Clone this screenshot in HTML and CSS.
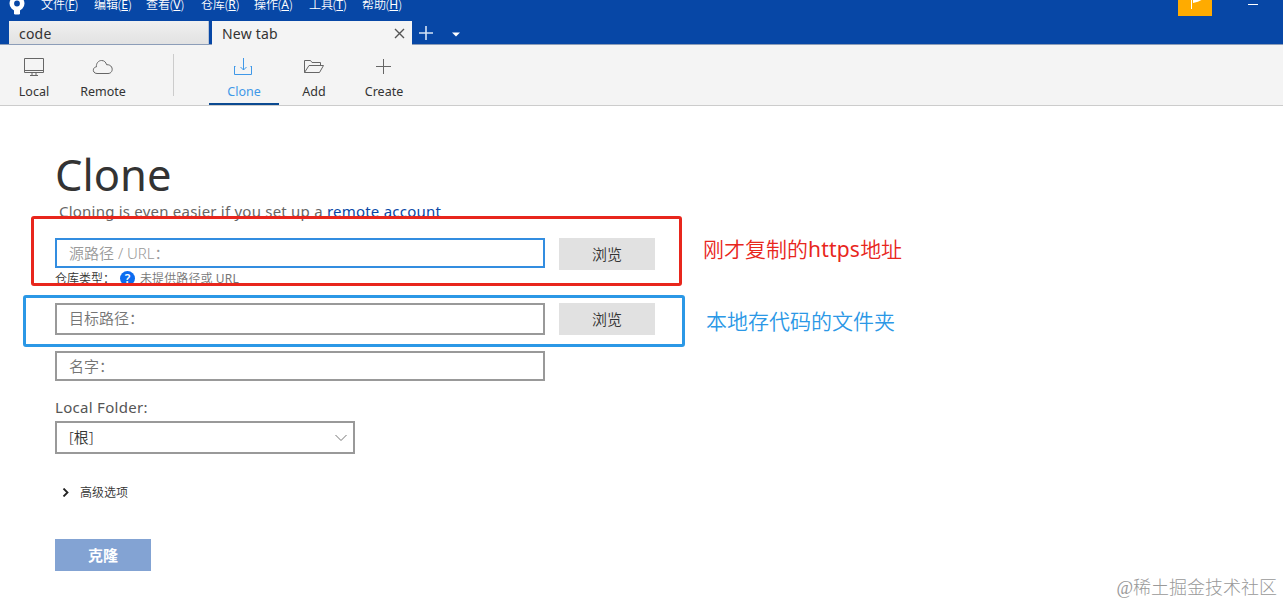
FILE: index.html
```
<!DOCTYPE html>
<html lang="zh-CN">
<head>
    <meta charset="UTF-8">
    <meta name="viewport" content="width=device-width, initial-scale=1.0">
    <title>Sourcetree</title>
    <link rel="stylesheet" href="styles.css">
</head>
<body>
    <header class="titlebar">
        <div class="menu-row">
            <svg class="logo" width="16" height="15" viewBox="0 0 16 15">
                <circle cx="8" cy="3.5" r="5.2" fill="none" stroke="#fff" stroke-width="4.6"/>
                <path d="M5 8h6v5.2q0 1.3-1.3 1.3H6.3Q5 14.5 5 13.2z" fill="#fff"/>
            </svg>
            <nav class="menu">
                <span class="menu-item">文件(<u>F</u>)</span>
                <span class="menu-item">编辑(<u>E</u>)</span>
                <span class="menu-item">查看(<u>V</u>)</span>
                <span class="menu-item">仓库(<u>R</u>)</span>
                <span class="menu-item">操作(<u>A</u>)</span>
                <span class="menu-item">工具(<u>T</u>)</span>
                <span class="menu-item">帮助(<u>H</u>)</span>
            </nav>
            <div class="flag">
                <svg width="34" height="16" viewBox="0 0 34 16">
                    <path d="M13.5 0v9" stroke="#fff" stroke-width="1"/>
                    <path d="M15 0h8.5q-3 2-8.5 3z" fill="#fff"/>
                </svg>
            </div>
            <span class="minimize"></span>
        </div>
        <div class="tabs">
            <div class="tab">code</div>
            <div class="tab active">
                <span>New tab</span>
                <svg width="11" height="11" viewBox="0 0 11 11">
                    <path d="M1 1l9 9M10 1l-9 9" stroke="#555" stroke-width="1.4" fill="none"/>
                </svg>
            </div>
            <svg class="tab-add" width="14" height="14" viewBox="0 0 14 14">
                <path d="M7 0v14M0 7h14" stroke="#d5e3f5" stroke-width="1.6"/>
            </svg>
            <svg class="tab-more" width="8" height="5" viewBox="0 0 8 5">
                <path d="M0 0.5h8L4 4.5z" fill="#fff"/>
            </svg>
        </div>
    </header>

    <div class="toolbar">
        <div class="tool">
            <svg width="22" height="20" viewBox="0 0 22 20">
                <path d="M1.5 1.5h19v14h-19zM1.5 13.5h19M9 15.5v3M13 15.5v3M7 18.5h8"/>
            </svg>
            <span>Local</span>
        </div>
        <div class="tool">
            <svg width="22" height="20" viewBox="0 0 22 20">
                <path d="M5 16.5C.2 16.5.2 10.2 4.4 9.9 4.1 6.2 6.5 3.5 9.5 3.5c2.9 0 4.3 1.7 5.1 4.2C21.8 7.3 21.8 16.5 16 16.5z"/>
            </svg>
            <span>Remote</span>
        </div>
        <span class="separator"></span>
        <div class="tool selected">
            <svg width="22" height="20" viewBox="0 0 22 20">
                <path d="M1.5 9v8.5h17V9M1.5 9.5h1M18.5 9.5h-1M10.5 1v12M7.5 10l3 3 3-3"/>
            </svg>
            <span>Clone</span>
        </div>
        <div class="tool">
            <svg width="22" height="20" viewBox="0 0 22 20">
                <path d="M1.5 15.5v-12h6l1.5 2h8.5v3M1.5 15.5h15l4-7H6z"/>
            </svg>
            <span>Add</span>
        </div>
        <div class="tool">
            <svg width="22" height="20" viewBox="0 0 22 20">
                <path d="M10.5 2v15M3 9.5h15"/>
            </svg>
            <span>Create</span>
        </div>
    </div>

    <main class="content">
        <h1>Clone</h1>
        <p class="intro">Cloning is even easier if you set up a <a href="#">remote account</a></p>

        <div class="row source-row">
            <input type="text" class="field source" placeholder="源路径 / URL：">
            <button type="button" class="browse">浏览</button>
        </div>
        <div class="repo-type">
            <span class="repo-label">仓库类型：</span>
            <span class="help">?</span>
            <span class="repo-status">未提供路径或 <span class="latin">URL</span></span>
        </div>
        <div class="row target-row">
            <input type="text" class="field target" placeholder="目标路径：">
            <button type="button" class="browse">浏览</button>
        </div>
        <input type="text" class="field name" placeholder="名字：">

        <div class="folder-label">Local Folder:</div>
        <div class="select">
            <span>[根]</span>
            <svg width="12" height="8" viewBox="0 0 12 8">
                <path d="M0.5 1l5.5 5.5L11.5 1" stroke="#777" fill="none"/>
            </svg>
        </div>

        <div class="advanced">
            <svg width="7" height="9" viewBox="0 0 7 9">
                <path d="M1.5 0.5l4 4-4 4" stroke="#222" stroke-width="1.8" fill="none"/>
            </svg>
            <span>高级选项</span>
        </div>
        <button type="button" class="clone-button">克隆</button>

        <!-- notes drawn over the form -->
        <div class="mark mark-red"></div>
        <div class="mark mark-blue"></div>
        <div class="note note-red">刚才复制的<span class="latin">https</span>地址</div>
        <div class="note note-blue">本地存代码的文件夹</div>
        <div class="watermark">@稀土掘金技术社区</div>
    </main>
</body>
</html>
```

FILE: styles.css
```
* {
    margin: 0;
    padding: 0;
    box-sizing: border-box;
}

body {
    height: 604px;
    overflow: hidden;
    background-color: #fff;
    color: #333;
    font-family: 'Noto Sans', 'Noto Sans CJK SC', sans-serif;
}

svg {
    display: block;
    flex-shrink: 0;
}

.latin {
    font-weight: 400;
    letter-spacing: 0.2px;
}

.titlebar {
    height: 45px;
    background-color: #0747a6;
    border-bottom: 1px solid #8c9db8;
}

.menu-row {
    display: flex;
    align-items: flex-start;
    height: 21px;
    padding-left: 9px;
}

.menu {
    display: grid;
    grid-template-columns: 53px 52px 55px 53px 55px 53px 60px;
    margin-left: 16px;
    color: #fff;
    font-size: 12px;
    line-height: 10px;
}

.menu-item {
    font-weight: 350;
    white-space: nowrap;
}

.menu-item u {
    font-weight: 400;
    text-underline-offset: 1px;
}

.flag {
    width: 34px;
    height: 16px;
    margin-left: auto;
    background-color: #ffab00;
}

.minimize {
    width: 10px;
    height: 1px;
    margin: 4px 25px 0 36px;
    background-color: #fff;
}

.tabs {
    display: flex;
    align-items: flex-start;
    padding-left: 9px;
}

.tab {
    display: flex;
    align-items: center;
    justify-content: space-between;
    width: 200px;
    height: 23px;
    margin-right: 3px;
    padding: 1px 7px 0 10px;
    background: linear-gradient(#f0f0f0, #e2e2e2);
    border-right: 1px solid #b8c4d6;
    font-size: 14px;
    letter-spacing: 0.2px;
    line-height: 23px;
}

.tab.active {
    height: 24px;
    margin-right: 7px;
    background: #f4f4f4;
    border-right: none;
}

.tab-add {
    margin-top: 5px;
}

.tab-more {
    margin: 11px 0 0 19px;
}

.toolbar {
    display: flex;
    height: 61px;
    background-color: #f4f4f4;
    border-bottom: 1px solid #ccc;
}

.tool {
    display: flex;
    flex-direction: column;
    align-items: center;
    width: 70px;
    height: 60px;
    padding-top: 12px;
    font-size: 12.5px;
    line-height: 18px;
}

.tool:first-child {
    width: 68px;
}

.tool svg {
    margin-bottom: 6px;
    fill: none;
    stroke: #666;
    stroke-width: 1;
}

.tool.selected {
    color: #3f98e8;
    border-bottom: 2px solid #0b4a91;
}

.tool.selected svg {
    stroke: #3f98e8;
}

.separator {
    width: 1px;
    height: 42px;
    margin: 9px 35px 0;
    background-color: #ccc;
}

.content {
    position: relative;
    display: flex;
    flex-direction: column;
    align-items: flex-start;
    height: 498px;
    padding: 37px 0 0 55px;
}

h1 {
    height: 58px;
    font-size: 43.5px;
    font-weight: 400;
    line-height: 62px;
}

.intro {
    height: 20px;
    margin-left: 4px;
    color: #666;
    font-size: 15px;
    letter-spacing: 0.22px;
    line-height: 20px;
}

.intro a {
    color: #0747a6;
    text-decoration: none;
}

.row {
    display: flex;
    gap: 14px;
}

.source-row {
    margin-top: 17px;
}

.field {
    width: 490px;
    height: 30px;
    padding: 0 12px;
    background-color: #fff;
    border: 2px solid #999;
    outline: none;
    font-family: inherit;
    font-size: 15px;
    font-weight: 350;
}

.field::placeholder {
    color: #757575;
}

.source {
    border-color: #338de0;
}

.source::placeholder {
    color: #999;
}

.target {
    height: 32px;
    padding-bottom: 2px;
}

.browse,
.clone-button {
    width: 96px;
    height: 32px;
    padding-bottom: 2px;
    border: none;
    font-family: inherit;
    font-size: 15px;
}

.browse {
    background-color: #e1e1e1;
    color: #333;
    font-weight: 350;
}

.repo-type {
    display: flex;
    align-items: center;
    height: 17px;
    font-size: 12px;
    font-weight: 350;
    line-height: 17px;
}

.repo-label {
    width: 65px;
}

.help {
    width: 15px;
    height: 15px;
    border-radius: 50%;
    background-color: #0b6cf0;
    color: #fff;
    font-weight: 600;
    line-height: 15px;
    text-align: center;
}

.repo-status {
    margin-left: 5px;
    color: #777;
    letter-spacing: 0.1px;
}

.target-row {
    margin-top: 16px;
}

.name {
    margin-top: 16px;
}

.folder-label {
    height: 20px;
    margin-top: 16px;
    color: #555;
    font-size: 15px;
    letter-spacing: 0.3px;
    line-height: 20px;
}

.select {
    display: flex;
    align-items: center;
    justify-content: space-between;
    width: 300px;
    height: 33px;
    margin-top: 4px;
    padding: 0 6px 0 12px;
    border: 2px solid #999;
    font-size: 15px;
    font-weight: 350;
}

.select span {
    padding-bottom: 2px;
}

.advanced {
    display: flex;
    align-items: center;
    gap: 11px;
    height: 20px;
    margin: 28px 0 0 7px;
    font-size: 12px;
    font-weight: 350;
}

.clone-button {
    margin-top: 37px;
    background-color: #83a3d3;
    color: #fff;
    font-weight: 700;
}

.mark {
    position: absolute;
    border: 3px solid #e8261c;
    border-radius: 3px;
}

.mark-red {
    top: 110px;
    left: 31px;
    width: 651px;
    height: 70px;
}

.mark-blue {
    top: 189px;
    left: 23px;
    width: 662px;
    height: 52px;
    border-color: #2b98e6;
}

.note {
    position: absolute;
    font-size: 21px;
    font-weight: 350;
    line-height: 30px;
    white-space: nowrap;
}

.note-red {
    top: 128px;
    left: 703px;
    color: #e8261c;
}

.note-blue {
    top: 200px;
    left: 706px;
    color: #2b98e6;
}

.watermark {
    position: absolute;
    right: 6px;
    bottom: 4px;
    color: #999;
    font-family: 'Liberation Serif', 'Noto Sans CJK SC', serif;
    font-size: 18px;
    font-weight: 300;
    line-height: 24px;
}
```
